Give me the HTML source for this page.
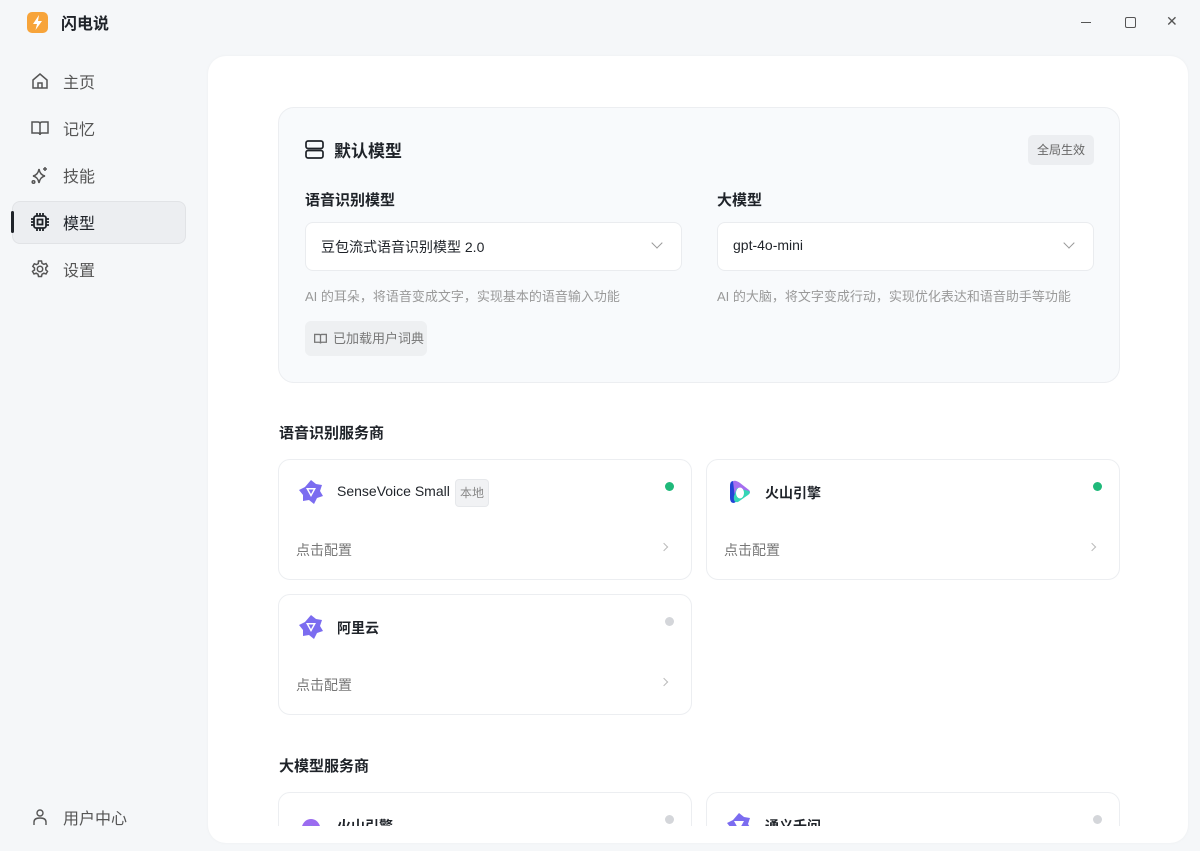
<!DOCTYPE html>
<html><head><meta charset="utf-8"><style>
*{box-sizing:border-box;margin:0;padding:0}
html,body{width:1200px;height:851px;overflow:hidden}
body{background:#f5f7f9;font-family:"Liberation Sans","Noto Sans CJK SC",sans-serif;color:#1f2329;position:relative}
.abs{position:absolute}
.nav{position:absolute;left:30px;display:flex;align-items:center;font-size:16px;color:#555}
.nav svg{width:20px;height:20px;margin-right:13px}
.main{position:absolute;left:208px;top:56px;width:980px;height:787px;background:#fff;border-radius:18px;box-shadow:0 0 3px rgba(0,0,0,.04);overflow:hidden}
.clip{position:absolute;left:0;top:0;width:980px;height:770px;overflow:hidden}
.card{position:absolute;width:414px;height:121px;border:1px solid #eceef1;border-radius:12px;background:#fff}
.card .name{position:absolute;left:58px;top:23px;font-size:14px;font-weight:bold;color:#1f2329}
.card .cfg{position:absolute;left:17px;top:80px;font-size:14px;color:#777}
.card .dot{position:absolute;right:17px;top:22px;width:9px;height:9px;border-radius:50%}
.card .chev{position:absolute;right:24px;top:84px;width:6px;height:6px;border-right:1.2px solid #bbb;border-top:1.2px solid #bbb;transform:rotate(45deg)}
.card svg.logo{position:absolute;left:18px;top:18px}
.sel{position:absolute;width:377px;height:49px;background:#fff;border:1px solid #eaecef;border-radius:8px;font-size:14px;padding:14px 15px;color:#1f2329}
.sel:after{content:"";position:absolute;right:20px;top:16px;width:7px;height:7px;border-right:1.3px solid #999;border-bottom:1.3px solid #999;transform:rotate(45deg)}
.desc{position:absolute;font-size:13px;color:#999}
</style></head><body>
<svg class="abs" style="left:27px;top:12px" width="21" height="21" viewBox="0 0 21 21"><rect width="21" height="21" rx="5" fill="#f7a43a"/><path d="M12 3 L6 12 H10 L8.5 18 L15 9 H11 Z" fill="#fff"/></svg>
<div class="abs" style="left:61px;top:10px;font-size:16px;font-weight:bold">闪电说</div>
<div class="abs" style="left:1081px;top:22px;width:10px;height:1px;background:#555"></div>
<div class="abs" style="left:1125px;top:17px;width:11px;height:11px;border:1.2px solid #555;border-radius:2px"></div>
<div class="abs" style="left:1166px;top:13px;font-size:14px;color:#555">✕</div>

<div class="nav" style="top:69px"><svg viewBox="0 0 20 20" fill="none" stroke="#555" stroke-width="1.5"><path d="M3 9 L10 3 L17 9 V17 H3 Z"/><path d="M8 17 V12 H12 V17"/></svg>主页</div>
<div class="nav" style="top:116px"><svg viewBox="0 0 20 20" fill="none" stroke="#555" stroke-width="1.5"><path d="M2 4 H8 Q10 4 10 6 V17 Q10 15 8 15 H2 Z M18 4 H12 Q10 4 10 6 V17 Q10 15 12 15 H18 Z"/></svg>记忆</div>
<div class="nav" style="top:163px"><svg viewBox="0 0 20 20" fill="none" stroke="#555" stroke-width="1.5"><path d="M9 4 Q10 10 15 11 Q10 12 9 18 Q8 12 3 11 Q8 10 9 4Z"/><path d="M15 2 V6 M13 4 H17"/><circle cx="3.5" cy="17" r="1.3"/></svg>技能</div>
<div class="abs" style="left:12px;top:201px;width:174px;height:43px;background:#eceef1;border:1px solid #e1e3e6;border-radius:8px"></div>
<div class="abs" style="left:11px;top:211px;width:3px;height:22px;background:#1f2329;border-radius:2px"></div>
<div class="nav" style="top:210px;color:#1f2329"><svg viewBox="0 0 20 20" fill="none" stroke="#1f2329" stroke-width="1.8"><rect x="4" y="4" width="12" height="12" rx="2"/><rect x="7.5" y="7.5" width="5" height="5"/><path d="M7 1v3M10 1v3M13 1v3M7 16v3M10 16v3M13 16v3M1 7h3M1 10h3M1 13h3M16 7h3M16 10h3M16 13h3"/></svg>模型</div>
<div class="nav" style="top:257px"><svg viewBox="0 0 20 20" fill="none" stroke="#555" stroke-width="1.5"><path d="M8.5 2h3l.5 2.3 1.8 1 2.2-.8 1.5 2.6-1.7 1.6v2.1l1.7 1.6-1.5 2.6-2.2-.8-1.8 1-.5 2.3h-3l-.5-2.3-1.8-1-2.2.8-1.5-2.6L4.5 11V9L2.8 7.4l1.5-2.6 2.2.8 1.8-1z"/><circle cx="10" cy="10" r="2.7"/></svg>设置</div>
<div class="nav" style="top:805px"><svg viewBox="0 0 20 20" fill="none" stroke="#555" stroke-width="1.4"><circle cx="10" cy="6" r="3"/><path d="M4 18 V15 Q4 11 10 11 Q16 11 16 15 V18"/></svg>用户中心</div>

<div class="main"><div class="clip">
 <div class="abs" style="left:70px;top:51px;width:842px;height:276px;background:#f8fafc;border:1px solid #eceef1;border-radius:16px">
  <svg class="abs" style="left:26px;top:32px" width="19" height="19" viewBox="0 0 19 19" fill="none" stroke="#1f2329" stroke-width="1.7"><rect x="1" y="1" width="17" height="7.5" rx="2"/><rect x="1" y="10.5" width="17" height="7.5" rx="2"/><path d="M4.5 4.7h.1M4.5 14.3h.1"/></svg>
  <div class="abs" style="left:55px;top:29px;font-size:17px;font-weight:bold">默认模型</div>
  <div class="abs" style="left:749px;top:27px;width:66px;height:30px;background:#eceef1;border-radius:5px;font-size:12px;color:#666;text-align:center;line-height:30px">全局生效</div>
  <div class="abs" style="left:26px;top:81px;font-size:15px;font-weight:bold">语音识别模型</div>
  <div class="abs" style="left:438px;top:81px;font-size:15px;font-weight:bold">大模型</div>
  <div class="sel" style="left:26px;top:114px">豆包流式语音识别模型 2.0</div>
  <div class="sel" style="left:438px;top:114px">gpt-4o-mini</div>
  <div class="desc" style="left:26px;top:178px">AI 的耳朵，将语音变成文字，实现基本的语音输入功能</div>
  <div class="desc" style="left:438px;top:178px">AI 的大脑，将文字变成行动，实现优化表达和语音助手等功能</div>
  <div class="abs" style="left:26px;top:213px;width:122px;height:35px;background:#eef0f2;border-radius:6px;font-size:13px;color:#777;line-height:35px;padding-left:28px;white-space:nowrap">已加载用户词典</div>
  <svg class="abs" style="left:35px;top:225px" width="13" height="12" viewBox="0 0 20 18" fill="none" stroke="#777" stroke-width="2"><path d="M1 2 H8 Q10 2 10 4 V16 Q10 14 8 14 H1 Z M19 2 H12 Q10 2 10 4 V16 Q10 14 12 14 H19 Z"/></svg>
 </div>
 <div class="abs" style="left:71px;top:366px;font-size:15px;font-weight:bold">语音识别服务商</div>

 <div class="card" style="left:70px;top:403px">
  <svg class="logo" width="28" height="28" viewBox="0 0 28 28"><path d="M14 2 L19 6 L25 7 L23 13 L26 18 L20 20 L17 26 L12 22 L6 23 L6 17 L2 12 L8 9 Z" fill="#7b6cf0"/><path d="M9 10 L19 10 L14 19 Z" fill="#fff"/><path d="M11.5 11.5 L16.5 11.5 L14 16 Z" fill="#7b6cf0"/></svg>
  <div class="name" style="font-weight:normal">SenseVoice Small</div>
  <div class="abs" style="left:176px;top:19px;width:34px;height:28px;background:#f1f2f4;border:1px solid #e6e8eb;border-radius:4px;font-size:12px;color:#888;text-align:center;line-height:26px">本地</div>
  <div class="dot" style="background:#1fb97a"></div>
  <div class="cfg">点击配置</div><div class="chev"></div>
 </div>
 <div class="card" style="left:498px;top:403px">
  <svg class="logo" width="28" height="28" viewBox="0 0 28 28"><path d="M8 3 Q5 3 5 8 V20 Q5 25 9 25 L14 22 Z" fill="#2344d6"/><path d="M8 3 Q11 2 15 5 L24 12 Q26 14 24 16 L14 23 L10 20 Z" fill="#a56ef0"/><path d="M12 10 L24 13 Q26 15 23 17 L13 24 Q8 25 9 18 Z" fill="#35d6b6"/><ellipse cx="15" cy="15" rx="4" ry="5.5" fill="#fff"/></svg>
  <div class="name">火山引擎</div>
  <div class="dot" style="background:#1fb97a"></div>
  <div class="cfg">点击配置</div><div class="chev"></div>
 </div>
 <div class="card" style="left:70px;top:538px">
  <svg class="logo" width="28" height="28" viewBox="0 0 28 28"><path d="M14 2 L19 6 L25 7 L23 13 L26 18 L20 20 L17 26 L12 22 L6 23 L6 17 L2 12 L8 9 Z" fill="#7b6cf0"/><path d="M9 10 L19 10 L14 19 Z" fill="#fff"/><path d="M11.5 11.5 L16.5 11.5 L14 16 Z" fill="#7b6cf0"/></svg>
  <div class="name">阿里云</div>
  <div class="dot" style="background:#d4d6da"></div>
  <div class="cfg">点击配置</div><div class="chev"></div>
 </div>

 <div class="abs" style="left:71px;top:699px;font-size:15px;font-weight:bold">大模型服务商</div>
 <div class="card" style="left:70px;top:736px">
  <svg class="logo" width="28" height="28" viewBox="0 0 28 28"><path d="M3 26 Q4 8 14 8 Q24 8 25 26 Z" fill="#9b6cf0"/><path d="M14 14 L22 26 H10 Z" fill="#35d6b6"/></svg>
  <div class="name">火山引擎</div>
  <div class="dot" style="background:#d4d6da"></div>
 </div>
 <div class="card" style="left:498px;top:736px">
  <svg class="logo" width="28" height="28" viewBox="0 0 28 28"><path d="M14 2 L19 6 L25 7 L23 13 L26 18 L20 20 L17 26 L12 22 L6 23 L6 17 L2 12 L8 9 Z" fill="#7b6cf0"/><path d="M9 10 L19 10 L14 19 Z" fill="#fff"/></svg>
  <div class="name">通义千问</div>
  <div class="dot" style="background:#d4d6da"></div>
 </div>
</div></div>
</body></html>
